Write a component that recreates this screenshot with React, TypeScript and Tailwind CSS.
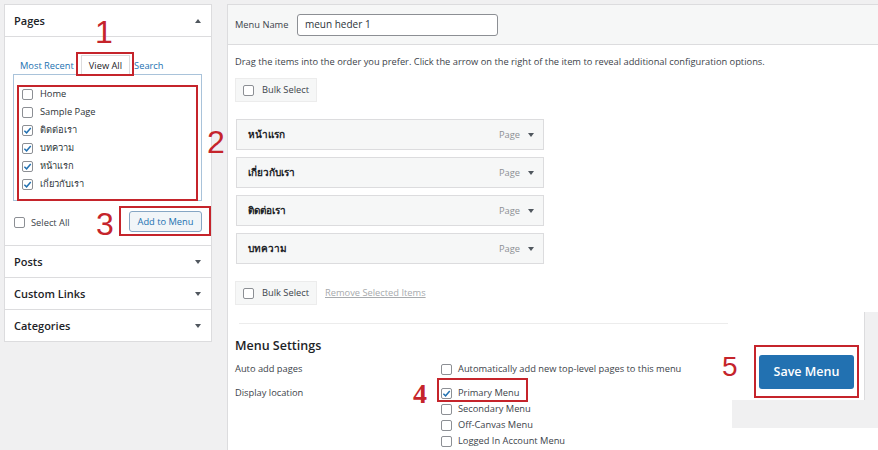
import React from "react";

const Check = ({ on = false }: { on?: boolean }) => (
  <span className="inline-flex items-center justify-center w-[11px] h-[11px] shrink-0 border border-[#8c8f94] rounded-[2px] bg-white">
    {on && (
      <svg width="9" height="9" viewBox="0 0 10 10">
        <path d="M1.5 5.2 L4 7.6 L8.6 2.2" fill="none" stroke="#2271b1" strokeWidth="1.6" />
      </svg>
    )}
  </span>
);

const TriDown = () => (
  <span className="inline-block w-0 h-0 border-l-[3.5px] border-r-[3.5px] border-t-[4px] border-l-transparent border-r-transparent border-t-[#50575e]" />
);
const TriUp = () => (
  <span className="inline-block w-0 h-0 border-l-[3.5px] border-r-[3.5px] border-b-[4px] border-l-transparent border-r-transparent border-b-[#50575e]" />
);

export default function App() {
  const pages: [string, boolean][] = [
    ["Home", false],
    ["Sample Page", false],
    ["ติดต่อเรา", true],
    ["บทความ", true],
    ["หน้าแรก", true],
    ["เกี่ยวกับเรา", true],
  ];
  const items = ["หน้าแรก", "เกี่ยวกับเรา", "ติดต่อเรา", "บทความ"];
  return (
    <div className="relative w-[878px] h-[450px] overflow-hidden bg-[#f0f0f1] flex items-start text-[#3c434a] font-['Open_Sans','Noto_Sans',sans-serif] text-[9.3px]">
      {/* Left panel */}
      <div className="ml-[4px] mt-[4px] w-[208px] h-[338px] bg-white border border-[#dcdcde] flex flex-col">
        <div className="h-[32px] border-b border-[#dcdcde] flex items-center justify-between pl-[9px] pr-[10px] pt-[1px]">
          <span className="text-[11px] font-semibold text-[#1d2327]">Pages</span>
          <TriUp />
        </div>
        <div className="pl-[8px] pr-[9px]">
          <div className="mt-[18px] h-[20px] flex items-end pl-[7px]">
            <span className="text-[#2271b1] leading-[18px] mr-[7px]">Most Recent</span>
            <span className="h-[20px] px-[7px] border border-b-0 border-[#dcdcde] bg-white leading-[19px] text-[#1d2327] relative z-10">View All</span>
            <span className="text-[#2271b1] leading-[18px] ml-[4px]">Search</span>
          </div>
          <div className="h-[127px] border border-[#a9c3da] pt-[10px] pl-[8px] -mt-[1px]">
            {pages.map(([t, on]) => (
              <div key={t} className="h-[18px] flex items-center gap-[7px]">
                <Check on={on} />
                <span className="text-[#2c3338]">{t}</span>
              </div>
            ))}
          </div>
          <div className="mt-[10px] h-[21px] flex items-center justify-between pl-[1px]">
            <div className="flex items-center gap-[6px] mt-[2px]">
              <Check />
              <span>Select All</span>
            </div>
            <span className="w-[73px] h-[21px] border border-[#86a6c4] rounded-[3px] bg-[#f1f5f8] text-[#2271b1] flex items-center justify-center">
              Add to Menu
            </span>
          </div>
        </div>
        <div className="mt-[13px]">
          {["Posts", "Custom Links", "Categories"].map((t) => (
            <div key={t} className="h-[32px] border-t border-[#dcdcde] flex items-center justify-between pl-[9px] pr-[10px] pt-[1px]">
              <span className="text-[11px] font-semibold text-[#1d2327]">{t}</span>
              <TriDown />
            </div>
          ))}
        </div>
      </div>

      {/* Right panel */}
      <div className="ml-[15px] mt-[4px] flex-1 h-[446px] bg-white border-l border-t border-[#dcdcde] flex flex-col">
        <div className="h-[40px] shrink-0 bg-[#f6f7f7] border-b border-[#dcdcde] flex items-center pl-[7px]">
          <span className="w-[62px]">Menu Name</span>
          <div className="w-[201px] h-[22px] border border-[#8c8f94] rounded-[3px] bg-white flex items-center pl-[7px] text-[10px] text-[#2c3338]">
            meun heder 1
          </div>
        </div>
        <div className="pl-[7px] flex flex-col">
          <div className="mt-[10px] leading-[14px]">
            Drag the items into the order you prefer. Click the arrow on the right of the item to reveal additional configuration options.
          </div>
          <div className="mt-[9px] w-[82px] h-[24px] bg-[#f6f7f7] border border-[#ececec] flex items-center gap-[8px] pl-[7px]">
            <Check />
            <span>Bulk Select</span>
          </div>
          <div className="mt-[17px] w-[309px] flex flex-col gap-[7px] pl-[1px]">
            {items.map((t) => (
              <div key={t} className="h-[31px] bg-[#f6f7f7] border border-[#dcdcde] flex items-center pl-[11px] pr-[9px]">
                <span className="flex-1 font-bold text-[10px] text-[#1d2327]">{t}</span>
                <span className="text-[#8c8f94] mr-[8px]">Page</span>
                <TriDown />
              </div>
            ))}
          </div>
          <div className="mt-[17px] flex items-center">
            <div className="w-[82px] h-[24px] bg-[#f6f7f7] border border-[#ececec] flex items-center gap-[8px] pl-[7px]">
              <Check />
              <span>Bulk Select</span>
            </div>
            <span className="ml-[8px] text-[#a7aaad] underline">Remove Selected Items</span>
          </div>
        </div>
        <div className="mt-[7px] flex flex-1">
          <div className="flex-1 flex flex-col">
            <div className="mt-[11px] ml-[11px] mr-[4px] border-t border-[#ececec]" />
            <div className="pl-[7px]">
              <div className="mt-[14px] h-[16px] leading-[16px] text-[12.5px] font-semibold text-[#1d2327]">Menu Settings</div>
              <div className="mt-[7px] flex h-[16px] items-center">
                <span className="w-[206px]">Auto add pages</span>
                <div className="flex items-center gap-[6px]">
                  <Check />
                  <span>Automatically add new top-level pages to this menu</span>
                </div>
              </div>
              <div className="mt-[8px] flex items-start">
                <span className="w-[206px] h-[16px] leading-[16px]">Display location</span>
                <div className="flex flex-col">
                  {[
                    ["Primary Menu", true],
                    ["Secondary Menu", false],
                    ["Off-Canvas Menu", false],
                    ["Logged In Account Menu", false],
                  ].map(([t, on]) => (
                    <div key={t as string} className="h-[16px] flex items-center gap-[6px]">
                      <Check on={on as boolean} />
                      <span>{t as string}</span>
                    </div>
                  ))}
                </div>
              </div>
            </div>
          </div>
          <div className="w-[146px] flex flex-col">
            <div className="flex h-[88px]">
              <div className="w-[133px] bg-white border-r border-[#dcdcde] pl-[27px] pt-[43px]">
                <div className="w-[95px] h-[34px] rounded-[3px] bg-[#2271b1] text-white text-[12.5px] font-semibold flex items-center justify-center">
                  Save Menu
                </div>
              </div>
              <div className="flex-1 bg-[#f0f0f1]" />
            </div>
            <div className="h-[28px] bg-[#f0f0f1]" />
          </div>
        </div>
      </div>

      {/* Annotations */}
      <div className="absolute left-[76px] top-[52px] w-[58px] h-[24px] border-2 border-[#c5242b] z-20" />
      <div className="absolute left-[17px] top-[85px] w-[181px] h-[116px] border-2 border-[#c5242b] z-20" />
      <div className="absolute left-[119px] top-[206px] w-[92px] h-[30px] border-2 border-[#c5242b] z-20" />
      <div className="absolute left-[437px] top-[378px] w-[91px] h-[24px] border-2 border-[#c5242b] z-20" />
      <div className="absolute left-[754px] top-[345px] w-[105px] h-[53px] border-2 border-[#c5242b] z-20" />

      <span className="absolute left-[95px] top-[16px] text-[32px] leading-none text-[#c5242b] font-['Liberation_Sans',sans-serif]">1</span>
      <span className="absolute left-[207px] top-[126px] text-[32px] leading-none text-[#c5242b] font-['Liberation_Sans',sans-serif]">2</span>
      <span className="absolute left-[96px] top-[208px] text-[32px] leading-none text-[#c5242b] font-['Liberation_Sans',sans-serif]">3</span>
      <span className="absolute left-[413px] top-[380px] text-[28px] leading-none font-bold text-[#c5242b] font-['Liberation_Serif',serif]">4</span>
      <span className="absolute left-[722px] top-[353px] text-[28px] leading-none text-[#c5242b] font-['Liberation_Sans',sans-serif]">5</span>
    </div>
  );
}
